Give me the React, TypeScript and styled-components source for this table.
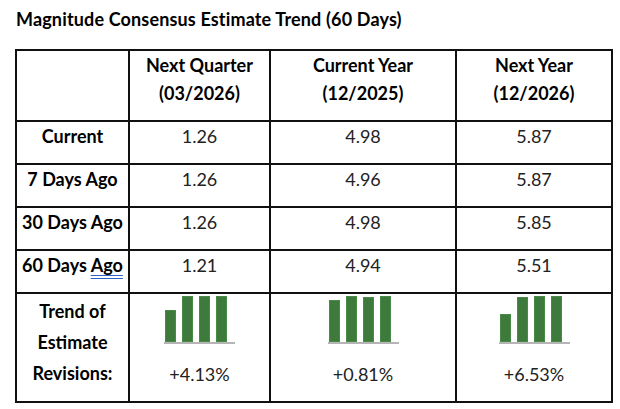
import React from "react";
import styled, { createGlobalStyle } from "styled-components";

const GlobalStyle = createGlobalStyle`
  html, body {
    margin: 0;
    padding: 0;
    background: #ffffff;
  }
  body {
    font-family: Lato, "Open Sans", sans-serif;
    color: #111;
  }
`;

const Page = styled.div`
  width: 620px;
  height: 409px;
  padding: 8px 0 0 15px;
  box-sizing: border-box;
`;

const Title = styled.h1`
  margin: 0 0 19px 1px;
  font-size: 18px;
  line-height: 22px;
  font-weight: 700;
  letter-spacing: 0.15px;
  color: #000;
`;

const Table = styled.table`
  border-collapse: collapse;
  table-layout: fixed;
  width: 598px;
`;

const Cell = styled.td<{ $bold?: boolean; $height: number }>`
  border: 2px solid #111;
  height: ${({ $height }) => $height}px;
  padding: 0 2px;
  vertical-align: top;
  text-align: center;
  font-size: 18px;
  line-height: 28px;
  font-weight: ${({ $bold }) => ($bold ? 700 : 400)};
  color: ${({ $bold }) => ($bold ? "#000" : "#222")};
  white-space: nowrap;
  box-sizing: border-box;
`;

const TrendLabel = styled.div`
  line-height: 31px;
  padding-top: 2px;
`;

const SpellMark = styled.span`
  text-decoration-line: underline;
  text-decoration-style: double;
  text-decoration-color: #2f5fc8;
  text-underline-offset: 3px;
`;

const TrendBox = styled.div`
  display: flex;
  flex-direction: column;
  align-items: center;
  padding-top: 2px;
`;

const Chart = styled.div`
  display: flex;
  align-items: flex-end;
  gap: 6px;
  width: 71px;
  height: 48px;
  padding: 0 7px 0 1px;
  box-sizing: border-box;
  border-bottom: 2px solid #b5b5b5;
`;

const Bar = styled.div`
  width: 11px;
  background: #3d7a3b;
  box-shadow: inset 0 0 0 1px #4a8a47;
`;

const Pct = styled.div`
  margin-top: 16px;
  line-height: 28px;
`;

const columns = [
  { title: "Next Quarter", date: "(03/2026)", width: 141 },
  { title: "Current Year", date: "(12/2025)", width: 186 },
  { title: "Next Year", date: "(12/2026)", width: 156 },
];

const rows: { label: React.ReactNode; values: string[] }[] = [
  { label: "Current", values: ["1.26", "4.98", "5.87"] },
  { label: "7 Days Ago", values: ["1.26", "4.96", "5.87"] },
  { label: "30 Days Ago", values: ["1.26", "4.98", "5.85"] },
  {
    label: (
      <>
        60 Days <SpellMark>Ago</SpellMark>
      </>
    ),
    values: ["1.21", "4.94", "5.51"],
  },
];

const trends = [
  { bars: [32, 46, 46, 46], pct: "+4.13%" },
  { bars: [42, 46, 45, 46], pct: "+0.81%" },
  { bars: [28, 45, 46, 46], pct: "+6.53%" },
];

const TrendChart: React.FC<{ bars: number[] }> = ({ bars }) => (
  <Chart>
    {bars.map((h, i) => (
      <Bar key={i} style={{ height: h }} />
    ))}
  </Chart>
);

export default function App() {
  return (
    <Page>
      <GlobalStyle />
      <Title>Magnitude Consensus Estimate Trend (60 Days)</Title>
      <Table>
        <colgroup>
          <col style={{ width: 113 }} />
          {columns.map((c) => (
            <col key={c.title} style={{ width: c.width }} />
          ))}
        </colgroup>
        <tbody>
          <tr>
            <Cell $bold $height={71} />
            {columns.map((c) => (
              <Cell key={c.title} $bold $height={71}>
                {c.title}
                <br />
                {c.date}
              </Cell>
            ))}
          </tr>
          {rows.map((r, i) => (
            <tr key={i}>
              <Cell $bold $height={43}>
                {r.label}
              </Cell>
              {r.values.map((v, j) => (
                <Cell key={j} $height={43}>
                  {v}
                </Cell>
              ))}
            </tr>
          ))}
          <tr>
            <Cell $bold $height={109}>
              <TrendLabel>
                Trend of
                <br />
                Estimate
                <br />
                Revisions:
              </TrendLabel>
            </Cell>
            {trends.map((t, i) => (
              <Cell key={i} $height={109}>
                <TrendBox>
                  <TrendChart bars={t.bars} />
                  <Pct>{t.pct}</Pct>
                </TrendBox>
              </Cell>
            ))}
          </tr>
        </tbody>
      </Table>
    </Page>
  );
}
